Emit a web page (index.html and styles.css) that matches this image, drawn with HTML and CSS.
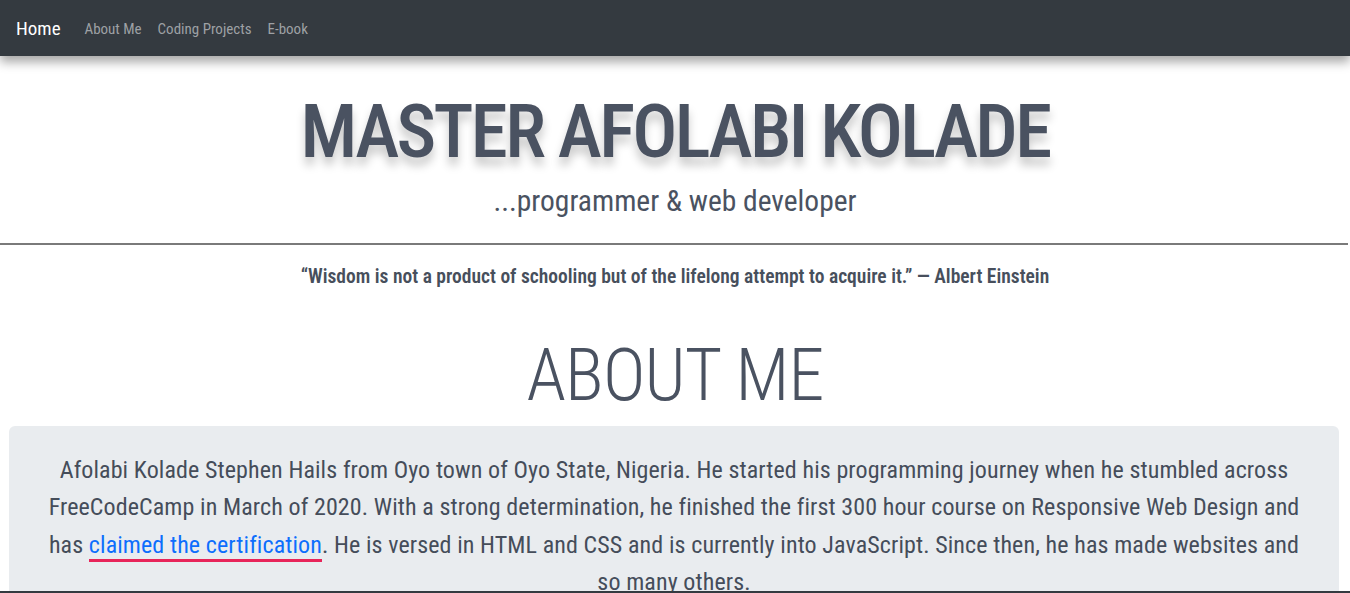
FILE: index.html
```html
<!DOCTYPE html>
<html lang="en">
<head>
<meta charset="utf-8">
<title>Master Afolabi Kolade</title>
<link rel="stylesheet" href="styles.css">
</head>
<body>
<nav class="navbar">
  <a class="brand" href="#">Home</a>
  <ul class="nav-links">
    <li><a href="#about">About Me</a></li>
    <li><a href="#projects">Coding Projects</a></li>
    <li><a href="#ebook">E-book</a></li>
  </ul>
</nav>
<header class="hero">
  <h1 class="hero-title">MASTER AFOLABI KOLADE</h1>
  <p class="hero-sub">...programmer &amp; web developer</p>
</header>
<hr class="divider">
<p class="quote">“Wisdom is not a product of schooling but of the lifelong attempt to acquire it.” — Albert Einstein</p>
<section id="about" class="about">
  <h2 class="section-title">ABOUT ME</h2>
  <div class="panel">
    <p class="panel-text">Afolabi Kolade Stephen Hails from Oyo town of Oyo State, Nigeria. He started his programming journey when he stumbled across<br>FreeCodeCamp in March of 2020. With a strong determination, he finished the first 300 hour course on Responsive Web Design and<br>has <a class="cert" href="#">claimed the certification</a>. He is versed in HTML and CSS and is currently into JavaScript. Since then, he has made websites and<br>so many others.</p>
  </div>
</section>
<footer class="footer"></footer>
</body>
</html>
```
FILE: styles.css
```css
* { box-sizing: border-box; }
body {
  margin: 0;
  font-family: "Roboto Condensed", "Roboto", "Liberation Sans", sans-serif;
  color: #474f5c;
  background: #fff;
}
.navbar {
  height: 56px;
  background: #343a40;
  display: flex;
  align-items: center;
  padding: 0 16px;
  box-shadow: 0 6px 10px rgba(0, 0, 0, 0.35);
  position: relative;
  z-index: 2;
}
.brand {
  color: #fff;
  text-decoration: none;
  font-size: 19px;
  margin-right: 24px;
}
.nav-links {
  list-style: none;
  display: flex;
  gap: 16px;
  margin: 0;
  padding: 0;
}
.nav-links a {
  color: #9ea1a5;
  text-decoration: none;
  font-size: 15px;
}
.hero {
  text-align: center;
  padding-top: 30px;
}
.hero-title {
  margin: 0;
  font-size: 75px;
  font-weight: 500;
  letter-spacing: -2.7px;
  line-height: 90px;
  color: #4a5261;
  text-shadow: 0 8px 10px rgba(0, 0, 0, 0.22);
}
.hero-sub {
  margin: 8px 0 0;
  font-size: 29.5px;
  line-height: 34px;
  color: #4a5261;
}
.divider {
  margin: 25px 0 0;
  border: 0;
  border-top: 2px solid #7a7a7a;
  width: 1348px;
}
.quote {
  text-align: center;
  font-size: 19.5px;
  font-weight: 600;
  line-height: 20.5px;
  margin: 22px 0 0;
  color: #474f5c;
}
.section-title {
  text-align: center;
  font-size: 72px;
  font-weight: 300;
  letter-spacing: -0.8px;
  line-height: 77px;
  margin: 49px 0 12px;
  color: #4a5261;
}
.panel {
  margin: 0 11px 0 9px;
  background: #e9ecef;
  border-radius: 6px;
  padding: 26px 16px 30px;
}
.panel-text {
  margin: 0;
  text-align: center;
  font-size: 24px;
  letter-spacing: 0.1px;
  line-height: 37.5px;
  color: #454d5a;
}
.cert {
  color: #0d6efd;
  text-decoration: none;
  border-bottom: 3px solid #e8255a;
}
.footer {
  position: fixed;
  left: 0;
  right: 0;
  bottom: 0;
  height: 2px;
  background: #343a40;
}
```
